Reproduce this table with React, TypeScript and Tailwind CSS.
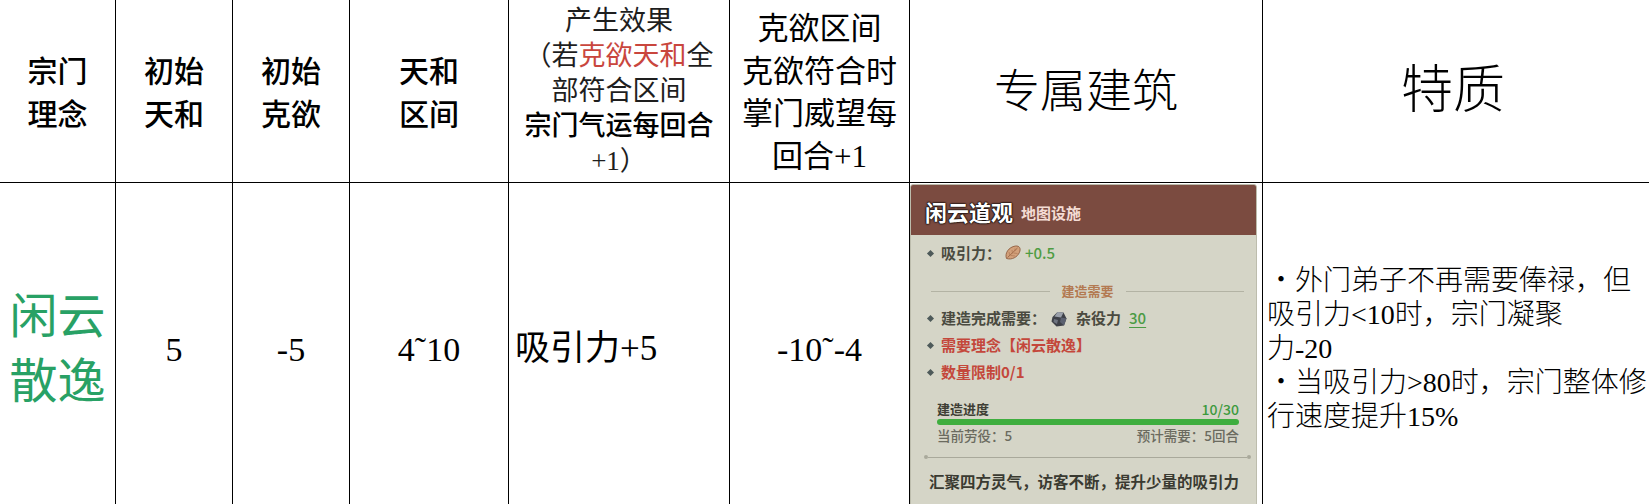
import React from "react"

const serif = "font-['Liberation_Serif','Noto_Sans_CJK_SC',serif]"
const game = "font-['Noto_Sans_CJK_SC','Noto_Sans',sans-serif]"

const Diamond = () => (
    <span className="inline-block w-[5px] h-[5px] rotate-45 mr-[8px] bg-[#4e5a5a]" />
)

const LeafIcon = () => (
    <svg width="18" height="16" viewBox="0 0 18 16" className="mx-[3px]">
        <path d="M2.5 13.5 C0.5 8.5 4.5 2 11.5 1 C15.5 0.6 17.2 3.5 15.4 7.5 C13.4 12 8 15.2 2.5 13.5Z" fill="#d2a07a" stroke="#8e5d3f" strokeWidth="0.9" />
        <path d="M3.5 12.5 L13.5 3" stroke="#94603f" strokeWidth="0.8" />
        <path d="M6 11 L5 7 M8.5 8.5 L8 5 M11 6 L11 3.5 M7 10.5 L11 11 M9.5 8 L13.5 8.5" stroke="#a7714d" strokeWidth="0.6" />
    </svg>
)

const RockIcon = () => (
    <svg width="18" height="18" viewBox="0 0 18 18" className="mx-[4px]">
        <path d="M2.5 7 L7.5 2 L13.5 2.5 L16.5 8.5 L14 15.5 L6.5 16.5 L1.5 11.5Z" fill="#3e4148" />
        <path d="M7.5 2 L13.5 2.5 L11 7.5 L4.5 6.5Z" fill="#9aa0aa" />
        <path d="M11 7.5 L16.5 8.5 L14 15.5 L10 12Z" fill="#5b6170" />
        <path d="M4 9 L8 10 L7 14 L3.5 12Z" fill="#6e7480" />
    </svg>
)

function BuildingPanel() {
    return (
        <div className={`${game} w-[347px] h-[330px] mt-[1px] bg-[#d5d5c7] border border-[#bdbdad] rounded-t-[3px] overflow-hidden`}>
            {/* title bar */}
            <div className="h-[50px] bg-[#7b4b40] flex items-center pl-[14px] pt-[2px]">
                <span className="text-[22px] font-bold text-white [text-shadow:0_0_2px_#000,0_0_2px_#000,0_0_1px_#000]">闲云道观</span>
                <span className="ml-[8px] mt-[4px] text-[15px] font-bold text-[#f4dcd4]">地图设施</span>
            </div>

            <div className="pt-[5px] text-[15px] font-bold text-[#4a4a40]">
                <div className="h-[26px] flex items-center pl-[17px]">
                    <Diamond />
                    <span>吸引力：</span>
                    <LeafIcon />
                    <span className="text-[#4f9c43] font-medium">+0.5</span>
                </div>

                <div className="mt-[14px] h-[22px] flex items-center gap-3 pl-[20px] pr-[12px]">
                    <div className="flex-1 h-px bg-[#b3b3a4]" />
                    <span className="text-[13px] text-[#b37a52]">建造需要</span>
                    <div className="flex-1 h-px bg-[#b3b3a4]" />
                </div>

                <div className="mt-[3px] h-[27px] flex items-center pl-[17px]">
                    <Diamond />
                    <span>建造完成需要：</span>
                    <RockIcon />
                    <span className="ml-[4px]">杂役力</span>
                    <span className="ml-[8px] text-[#4b9b45] underline underline-offset-[3px] font-medium">30</span>
                </div>
                <div className="h-[26px] flex items-center pl-[17px] text-[#c4473b]">
                    <Diamond />
                    <span>需要理念【闲云散逸】</span>
                </div>
                <div className="h-[28px] flex items-center pl-[17px] text-[#c4473b]">
                    <Diamond />
                    <span>数量限制0/1</span>
                </div>

                {/* progress */}
                <div className="mt-[14px] ml-[26px] w-[302px]">
                    <div className="h-[18px] flex items-center justify-between">
                        <span className="text-[13px] text-[#3f3f35]">建造进度</span>
                        <span className="text-[14px] font-medium text-[#3d9a3d]">10/30</span>
                    </div>
                    <div className="mt-[1px] h-[6px] rounded-full bg-[#3fae3f]" />
                    <div className="h-[20px] flex items-center justify-between text-[13.5px] font-medium text-[#6b6b5f]">
                        <span>当前劳役：5</span>
                        <span>预计需要：5回合</span>
                    </div>
                </div>

                <div className="mt-[10px] ml-[13px] w-[327px] flex items-center">
                    <div className="w-[4px] h-[4px] rounded-full bg-[#a9a99b]" />
                    <div className="flex-1 h-px bg-[#a9a99b]" />
                    <div className="w-[4px] h-[4px] rounded-full bg-[#a9a99b]" />
                </div>

                <div className="mt-[13px] h-[20px] flex items-center pl-[18px] text-[15.5px] text-[#3a3a31]">
                    汇聚四方灵气，访客不断，提升少量的吸引力
                </div>
            </div>
        </div>
    )
}

export default function App() {
    const head = "border-r border-b border-black flex items-center justify-center text-center"
    const body = "border-r border-black flex items-center justify-center text-center"

    return (
        <div className={`${serif} h-[504px] w-[1649px] overflow-hidden bg-white text-black`}>
            <div className="grid grid-cols-[116px_117px_117px_159px_221px_180px_353px_1fr] grid-rows-[183px_332px]">
                {/* header */}
                <div className={`${head} text-[30px] leading-[43px] font-medium pt-[4px]`}>宗门<br />理念</div>
                <div className={`${head} text-[30px] leading-[43px] font-medium pt-[4px]`}>初始<br />天和</div>
                <div className={`${head} text-[30px] leading-[43px] font-medium pt-[4px]`}>初始<br />克欲</div>
                <div className={`${head} text-[30px] leading-[43px] font-medium pt-[4px]`}>天和<br />区间</div>
                <div className={`${head} text-[27px] leading-[35px] text-[#1e1e1e]`}>
                    <div>
                        产生效果<br />
                        （若<span className="text-[#c9463d]">克欲天和</span>全<br />
                        部符合区间<br />
                        <span className="text-black font-medium">宗门气运每回合</span><br />
                        +1）
                    </div>
                </div>
                <div className={`${head} text-[31px] leading-[42.5px] pt-[4px]`}>
                    克欲区间<br />克欲符合时<br />掌门威望每<br />回合+1
                </div>
                <div className={`${head} text-[46px] font-light`}>专属建筑</div>
                <div className="border-b border-black flex items-center justify-center text-[52px] font-light pr-[6px]">特质</div>

                {/* row */}
                <div className={`${body} text-[48px] leading-[65px] text-[#28a165]`}>闲云<br />散逸</div>
                <div className={`${body} text-[34px]`}>5</div>
                <div className={`${body} text-[34px]`}>-5</div>
                <div className={`${body} text-[34px]`}>4˜10</div>
                <div className="border-r border-black flex items-center justify-start pl-[6px] text-[35px]">吸引力+5</div>
                <div className={`${body} text-[34px]`}>-10˜-4</div>
                <div className="border-r border-black flex items-start justify-start">
                    <BuildingPanel />
                </div>
                <div className="flex items-center pl-[4px] text-[28px] leading-[34px] font-light">
                    <div>
                        ・外门弟子不再需要俸禄，但<br />
                        吸引力&lt;10时，宗门凝聚<br />
                        力-20<br />
                        ・当吸引力&gt;80时，宗门整体修<br />
                        行速度提升15%
                    </div>
                </div>
            </div>
        </div>
    )
}
